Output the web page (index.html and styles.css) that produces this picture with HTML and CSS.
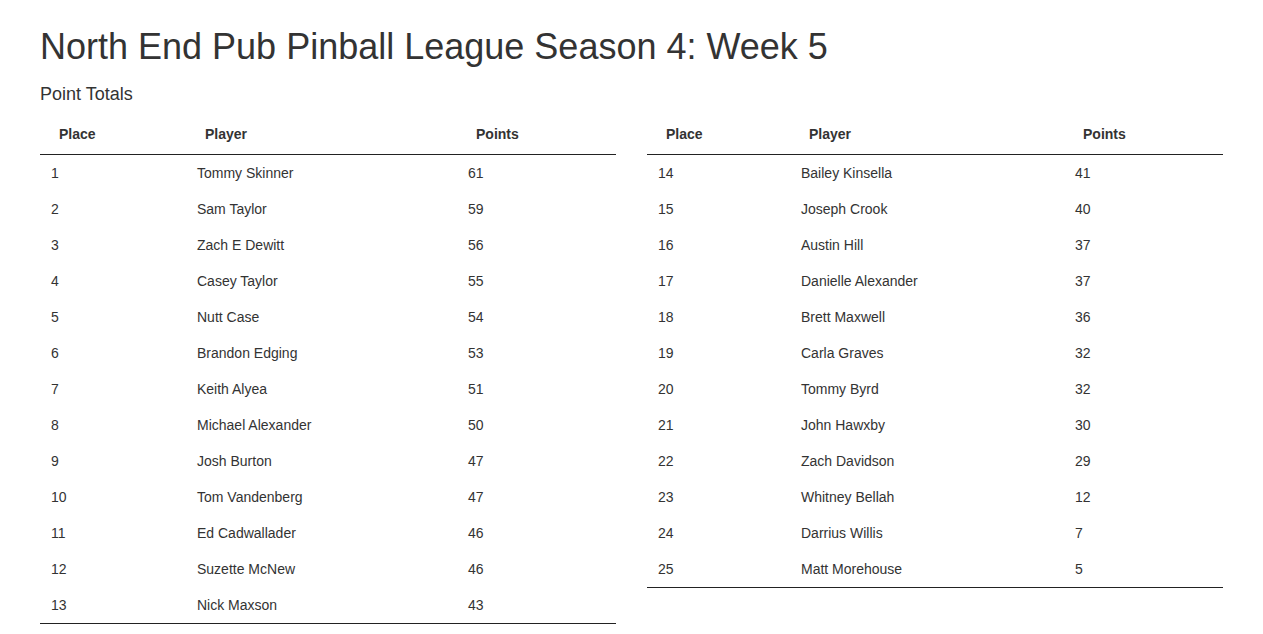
FILE: index.html
```html
<!DOCTYPE html>
<html>
<head>
<meta charset="utf-8">
<link rel="stylesheet" href="styles.css">
</head>
<body>
<div class="page">
  <h1 class="title">North End Pub Pinball League Season 4: Week 5</h1>
  <h4 class="subtitle">Point Totals</h4>
  <div class="tables">
    <table class="standings left">
      <thead><tr><th class="c-place">Place</th><th class="c-player">Player</th><th class="c-points">Points</th></tr></thead>
      <tbody>
        <tr><td>1</td><td>Tommy Skinner</td><td>61</td></tr>
        <tr><td>2</td><td>Sam Taylor</td><td>59</td></tr>
        <tr><td>3</td><td>Zach E Dewitt</td><td>56</td></tr>
        <tr><td>4</td><td>Casey Taylor</td><td>55</td></tr>
        <tr><td>5</td><td>Nutt Case</td><td>54</td></tr>
        <tr><td>6</td><td>Brandon Edging</td><td>53</td></tr>
        <tr><td>7</td><td>Keith Alyea</td><td>51</td></tr>
        <tr><td>8</td><td>Michael Alexander</td><td>50</td></tr>
        <tr><td>9</td><td>Josh Burton</td><td>47</td></tr>
        <tr><td>10</td><td>Tom Vandenberg</td><td>47</td></tr>
        <tr><td>11</td><td>Ed Cadwallader</td><td>46</td></tr>
        <tr><td>12</td><td>Suzette McNew</td><td>46</td></tr>
        <tr><td>13</td><td>Nick Maxson</td><td>43</td></tr>
      </tbody>
    </table>
    <table class="standings right">
      <thead><tr><th class="c-place">Place</th><th class="c-player">Player</th><th class="c-points">Points</th></tr></thead>
      <tbody>
        <tr><td>14</td><td>Bailey Kinsella</td><td>41</td></tr>
        <tr><td>15</td><td>Joseph Crook</td><td>40</td></tr>
        <tr><td>16</td><td>Austin Hill</td><td>37</td></tr>
        <tr><td>17</td><td>Danielle Alexander</td><td>37</td></tr>
        <tr><td>18</td><td>Brett Maxwell</td><td>36</td></tr>
        <tr><td>19</td><td>Carla Graves</td><td>32</td></tr>
        <tr><td>20</td><td>Tommy Byrd</td><td>32</td></tr>
        <tr><td>21</td><td>John Hawxby</td><td>30</td></tr>
        <tr><td>22</td><td>Zach Davidson</td><td>29</td></tr>
        <tr><td>23</td><td>Whitney Bellah</td><td>12</td></tr>
        <tr><td>24</td><td>Darrius Willis</td><td>7</td></tr>
        <tr><td>25</td><td>Matt Morehouse</td><td>5</td></tr>
      </tbody>
    </table>
  </div>
</div>
</body>
</html>
```
FILE: styles.css
```css
html, body {
  margin: 0;
  padding: 0;
  background: #fff;
}
body {
  font-family: "Liberation Sans", Arial, Helvetica, sans-serif;
  font-size: 14px;
  line-height: 20px;
  color: #333;
}
.page {
  padding: 27px 40px 0 40px;
}
.title {
  margin: 0;
  font-size: 36px;
  font-weight: 500;
  line-height: 39.6px;
}
.subtitle {
  margin: 18px 0 0 0;
  font-size: 18px;
  font-weight: 500;
  line-height: 19.8px;
}
.tables {
  margin-top: 13px;
  display: grid;
  grid-template-columns: 576px 576px;
  column-gap: 31px;
  align-items: start;
}
.standings {
  width: 100%;
  border-collapse: collapse;
  table-layout: fixed;
  border-bottom: 1px solid #222;
}
.standings th {
  text-align: left;
  font-weight: bold;
  padding: 7px 19px 10px 19px;
  line-height: 20px;
  height: 20px;
  border-bottom: 1px solid #222;
}
.standings td {
  padding: 8px 11px;
  line-height: 20px;
  height: 20px;
}
.left th.c-place { width: 108px; }
.left th.c-player { width: 233px; }
.right th.c-place { width: 105px; }
.right th.c-player { width: 236px; }
```
